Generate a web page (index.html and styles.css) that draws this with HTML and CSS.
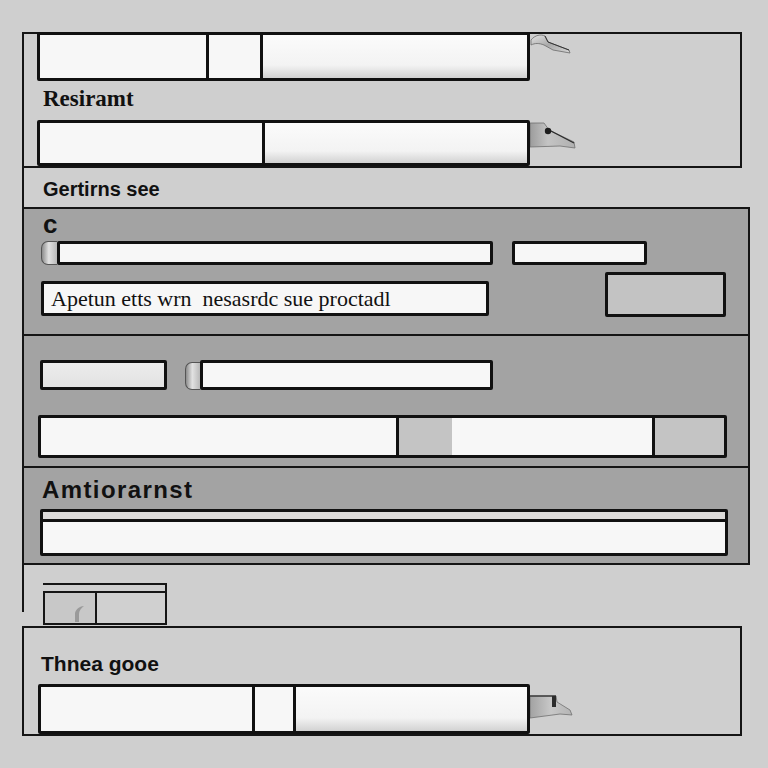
FILE: index.html
```html
<!DOCTYPE html>
<html lang="en">
<head>
    <meta charset="UTF-8">
    <meta name="viewport" content="width=device-width, initial-scale=1.0">
    <title>Resiramt</title>
    <link rel="stylesheet" href="styles.css">
</head>
<body>
    <div class="page">
        <div class="frame">
            <section class="panel-top">
                <div class="field-row first-row">
                    <div class="field field-wide">
                        <span class="cell cell-name"></span>
                        <span class="cell cell-mid"></span>
                        <span class="cell cell-rest shaded"></span>
                    </div>
                    <svg class="clip clip-hook" width="42" height="22" viewBox="0 0 42 22">
                        <defs>
                            <linearGradient id="steel1" x1="0" y1="0" x2="1" y2="1">
                                <stop offset="0" stop-color="#e4e4e4"/>
                                <stop offset="0.5" stop-color="#a9a9a9"/>
                                <stop offset="1" stop-color="#d6d6d6"/>
                            </linearGradient>
                        </defs>
                        <path d="M1 7 C5 2, 11 1, 15 3 L18 9 L39 17 L40 20 L23 17 L14 12 C9 10, 5 10, 1 12 Z" fill="url(#steel1)" stroke="#6a6a6a" stroke-width="0.8"/>
                        <path d="M15 3 L18 9 L39 17" fill="none" stroke="#333" stroke-width="1"/>
                    </svg>
                </div>
                <h3 class="label-serif">Resiramt</h3>
                <div class="field-row">
                    <div class="field field-wide field-low">
                        <span class="cell cell-long"></span>
                        <span class="cell cell-rest shaded"></span>
                    </div>
                    <svg class="clip clip-latch" width="46" height="28" viewBox="0 0 46 28">
                        <defs>
                            <linearGradient id="steel2" x1="0" y1="0" x2="1" y2="0">
                                <stop offset="0" stop-color="#9c9c9c"/>
                                <stop offset="0.4" stop-color="#c4c4c4"/>
                                <stop offset="1" stop-color="#b0b0b0"/>
                            </linearGradient>
                        </defs>
                        <path d="M0 1 L14 1 L19 8 L44 20 L45 26 L30 24 L0 25 Z" fill="url(#steel2)" stroke="#707070" stroke-width="0.8"/>
                        <path d="M19 8 L44 21" stroke="#2a2a2a" stroke-width="1.2"/>
                        <circle cx="18" cy="9" r="3.2" fill="#1d1d1d"/>
                    </svg>
                </div>
            </section>

            <h3 class="heading">Gertirns see</h3>

            <section class="settings">
                <div class="sec sec-a">
                    <div class="mark">c</div>
                    <div class="row row-a1">
                        <span class="knob"></span>
                        <span class="input input-main"></span>
                        <span class="input input-side"></span>
                    </div>
                    <div class="row row-a2">
                        <span class="input input-text">Apetun etts wrn&nbsp; nesasrdc sue proctadl</span>
                        <span class="box-gray"></span>
                    </div>
                </div>

                <div class="sec sec-b">
                    <div class="row row-b1">
                        <span class="input input-short"></span>
                        <span class="knob knob-b"></span>
                        <span class="input input-mid"></span>
                    </div>
                    <div class="field field-split">
                        <span class="cell split-1"></span>
                        <span class="cell split-2 gray"></span>
                        <span class="cell split-3"></span>
                        <span class="cell split-4 gray"></span>
                    </div>
                </div>

                <div class="sec sec-c">
                    <h3 class="title">Amtiorarnst</h3>
                    <div class="stack">
                        <div class="stack-strip"></div>
                        <div class="stack-body"></div>
                    </div>
                </div>
            </section>

            <div class="tab-row">
                <div class="tab">
                    <div class="tab-cap"></div>
                    <div class="tab-box">
                        <span class="tab-cell tab-on">
                            <svg width="12" height="18" viewBox="0 0 12 18">
                                <path d="M2 17 L2 8 C3 4, 7 1, 11 1 C8 3, 6 6, 6 9 L6 17 Z" fill="#9a9a9a"/>
                            </svg>
                        </span>
                        <span class="tab-cell"></span>
                    </div>
                </div>
            </div>
        </div>

        <section class="panel-bottom">
            <h3 class="title-small">Thnea gooe</h3>
            <div class="field-row">
                <div class="field field-wide field-base">
                    <span class="cell cell-base"></span>
                    <span class="cell cell-narrow"></span>
                    <span class="cell cell-rest shaded"></span>
                </div>
                <svg class="clip clip-latch2" width="44" height="26" viewBox="0 0 44 26">
                    <defs>
                        <linearGradient id="steel3" x1="0" y1="0" x2="1" y2="0">
                            <stop offset="0" stop-color="#a2a2a2"/>
                            <stop offset="0.5" stop-color="#c8c8c8"/>
                            <stop offset="1" stop-color="#b4b4b4"/>
                        </linearGradient>
                    </defs>
                    <path d="M0 2 L26 2 L27 8 L40 16 L42 21 L30 20 L0 24 Z" fill="url(#steel3)" stroke="#707070" stroke-width="0.8"/>
                    <path d="M0 2 L26 2" stroke="#3a3a3a" stroke-width="1.4"/>
                    <rect x="22" y="2" width="4" height="11" fill="#2c2c2c"/>
                </svg>
            </div>
        </section>
    </div>
</body>
</html>
```

FILE: styles.css
```css
* {
    box-sizing: border-box;
}

body {
    margin: 0;
    background-color: #cfcfcf;
    font-family: "Liberation Sans", Arial, sans-serif;
    color: #111;
}

.page {
    padding: 32px 0 0 22px;
}

.frame {
    display: flow-root;
    border-left: 2px solid #151515;
}

/* top panel */

.panel-top {
    width: 718px;
    border: 2px solid #151515;
    border-left: none;
    padding-left: 13px;
}

.field-row {
    display: flex;
    align-items: flex-start;
}

.first-row {
    margin-top: -2px;
}

.field {
    display: flex;
    border: 3px solid #111;
    border-radius: 2px;
    background-color: #f7f7f7;
}

.cell {
    display: block;
    height: 100%;
}

.cell + .cell {
    border-left: 3px solid #111;
}

.field-wide {
    width: 493px;
    height: 49px;
}

.field-low {
    height: 46px;
}

.cell-name {
    width: 166px;
}

.cell-mid {
    width: 54px;
}

.cell-long {
    width: 222px;
}

.cell-rest {
    flex: 1;
}

.shaded {
    background: linear-gradient(180deg, #fbfbfb 0%, #f3f3f3 70%, #d2d2d2 100%);
}

.clip {
    display: block;
    margin-top: 1px;
}

.clip-latch {
    margin-top: 2px;
}

.label-serif {
    margin: 6px 0 9px 6px;
    font-family: "Liberation Serif", "Times New Roman", serif;
    font-size: 23px;
    line-height: 24px;
    font-weight: bold;
}

.heading {
    margin: 9px 0 6px 19px;
    font-size: 20px;
    line-height: 24px;
    font-weight: bold;
}

/* gray settings block */

.settings {
    width: 726px;
    background-color: #a3a3a3;
    border: 2px solid #151515;
    border-left: none;
}

.sec {
    padding-left: 17px;
}

.sec-a {
    height: 125px;
    padding-top: 5px;
}

.sec-b {
    height: 132px;
    border-top: 2px solid #151515;
    padding: 24px 0 0 14px;
}

.sec-c {
    height: 97px;
    border-top: 2px solid #151515;
    padding: 9px 0 0 16px;
}

.mark {
    margin-left: 2px;
    height: 20px;
    font-size: 26px;
    line-height: 20px;
    font-weight: bold;
}

.row {
    display: flex;
    align-items: flex-end;
}

.row-a1 {
    margin-top: 7px;
}

.row-a2 {
    margin-top: 7px;
}

.input {
    display: block;
    border: 3px solid #111;
    border-radius: 2px;
    background-color: #f7f7f7;
}

.knob {
    display: block;
    width: 16px;
    height: 24px;
    border: 1px solid #555;
    border-right: none;
    border-radius: 7px 0 0 7px;
    background: linear-gradient(90deg, #8c8c8c 0%, #e2e2e2 45%, #b9b9b9 100%);
}

.input-main {
    width: 436px;
    height: 24px;
}

.input-side {
    width: 135px;
    height: 24px;
    margin-left: 19px;
}

.input-text {
    width: 448px;
    height: 35px;
    margin-bottom: 1px;
    padding: 0 7px;
    font-family: "Liberation Serif", "Times New Roman", serif;
    font-size: 22px;
    line-height: 29px;
    white-space: nowrap;
    overflow: hidden;
}

.box-gray {
    display: block;
    width: 121px;
    height: 45px;
    margin-left: 116px;
    border: 3px solid #111;
    border-radius: 2px;
    background-color: #c3c3c3;
}

.row-b1 {
    margin-left: 2px;
}

.input-short {
    width: 127px;
    height: 30px;
    background: linear-gradient(180deg, #ececec, #e2e2e2);
}

.knob-b {
    width: 15px;
    height: 28px;
    margin-left: 18px;
}

.input-mid {
    width: 293px;
    height: 30px;
}

.field-split {
    width: 689px;
    height: 43px;
    margin-top: 25px;
}

.split-1 {
    width: 355px;
}

.split-2 {
    width: 56px;
}

.split-3 {
    width: 200px;
    border-left: none !important;
}

.split-4 {
    flex: 1;
}

.gray {
    background-color: #c4c4c4;
}

.title {
    margin: 0 0 6px 2px;
    font-size: 24px;
    line-height: 26px;
    font-weight: bold;
    letter-spacing: 1.4px;
}

.stack {
    width: 688px;
    border: 3px solid #111;
    border-radius: 2px;
}

.stack-strip {
    height: 10px;
    background-color: #dcdad9;
    border-bottom: 3px solid #111;
}

.stack-body {
    height: 31px;
    background-color: #f7f7f7;
}

/* tab below the settings */

.tab-row {
    margin: 18px 0 -13px 19px;
}

.tab {
    width: 124px;
}

.tab-cap {
    height: 8px;
    border-top: 2px solid #151515;
    border-right: 2px solid #151515;
}

.tab-box {
    display: flex;
    height: 34px;
    border: 2px solid #151515;
}

.tab-cell {
    flex: 1;
    background-color: #d0d0d0;
}

.tab-on {
    flex: 0 0 52px;
    display: flex;
    align-items: flex-end;
    justify-content: flex-end;
    padding-right: 10px;
    border-right: 2px solid #151515;
    background-color: #c8c8c8;
}

/* bottom panel */

.panel-bottom {
    width: 720px;
    height: 110px;
    margin-top: 14px;
    border: 2px solid #151515;
    padding: 24px 0 0 14px;
}

.title-small {
    margin: 0 0 8px 3px;
    font-size: 21px;
    line-height: 24px;
    font-weight: bold;
}

.field-base {
    width: 492px;
    height: 50px;
}

.cell-base {
    width: 211px;
}

.cell-narrow {
    width: 41px;
}

.clip-latch2 {
    margin-top: 10px;
}
```
